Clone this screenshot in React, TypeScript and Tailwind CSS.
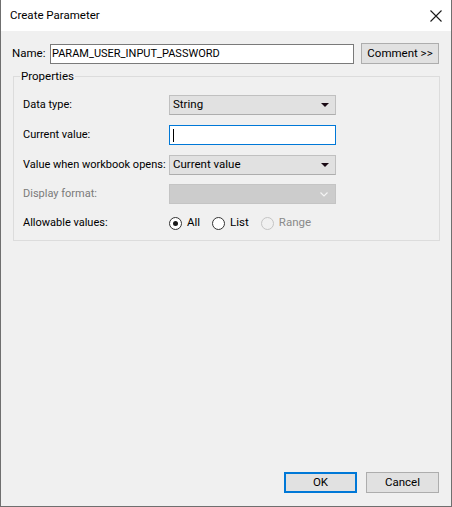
import React from 'react';

const font = { fontFamily: 'Roboto, "Liberation Sans", Arial, sans-serif' };

const Arrow: React.FC<{ disabled?: boolean }> = ({ disabled }) =>
  disabled ? (
    <svg width="8" height="5" viewBox="0 0 8 5" className="shrink-0">
      <path d="M0.5 0.5 L4 4 L7.5 0.5" fill="none" stroke="#f4f4f4" strokeWidth="1.2" />
    </svg>
  ) : (
    <svg width="8" height="4" viewBox="0 0 8 4" className="shrink-0">
      <path d="M0 0 H8 L4 4 Z" fill="#1a0a14" />
    </svg>
  );

const Select: React.FC<{ value?: string; disabled?: boolean }> = ({ value, disabled }) => (
  <div
    className={
      disabled
        ? 'w-[167px] h-[20px] flex items-center justify-end pr-[7px] bg-[#cccccc] border border-[#c4c4c4]'
        : 'w-[167px] h-[20px] flex items-center justify-between pl-[3px] pr-[6px] bg-[#e1e1e1] border border-[#c0c0c0] border-b-[#adadad]'
    }
  >
    {value && <span className="text-[11.5px] text-black leading-none whitespace-nowrap">{value}</span>}
    <Arrow disabled={disabled} />
  </div>
);

const Radio: React.FC<{ label: string; checked?: boolean; disabled?: boolean }> = ({ label, checked, disabled }) => (
  <div className="flex items-center gap-[5px]">
    <span
      className={
        'w-[13px] h-[13px] rounded-full border flex items-center justify-center ' +
        (disabled ? 'border-[#c4c4c4] bg-[#f0f0f0]' : 'border-[#333333] bg-white')
      }
    >
      {checked && <span className="w-[5px] h-[5px] rounded-full bg-[#1a1a1a]" />}
    </span>
    <span className={'text-[11.5px] ' + (disabled ? 'text-[#8a8a8a]' : 'text-black')}>{label}</span>
  </div>
);

const Row: React.FC<{ label: string; disabled?: boolean; children: React.ReactNode }> = ({ label, disabled, children }) => (
  <div className="flex items-center h-[20px]">
    <span className={'w-[146px] shrink-0 whitespace-nowrap text-[11px] ' + (disabled ? 'text-[#7a7a7a]' : 'text-black')}>
      {label}
    </span>
    {children}
  </div>
);

export default function App() {
  return (
    <div style={font} className="w-[452px] h-[507px] flex flex-col border-x border-b border-[#6f6f6f] bg-[#f0f0f0] text-black">
      <div className="h-[31px] bg-white flex items-center justify-between pl-[9px] pr-[9px] shrink-0">
        <span className="text-[11.5px] pt-[1px]">Create Parameter</span>
        <svg width="12" height="12" viewBox="0 0 12 12">
          <path d="M0.5 0.5 L11.5 11.5 M11.5 0.5 L0.5 11.5" stroke="#1a1a1a" strokeWidth="1.1" />
        </svg>
      </div>

      <div className="flex-1 flex flex-col">
        <div className="mt-[12px] flex items-center pl-[11px] pr-[12px] h-[21px]">
          <span className="text-[11.5px] w-[38px]">Name:</span>
          <div className="w-[304px] h-[20px] bg-white border border-[#7a7a7a] flex items-center pl-[1px]">
            <span className="text-[11px] leading-none whitespace-nowrap">PARAM_USER_INPUT_PASSWORD</span>
          </div>
          <button className="ml-auto w-[78px] h-[21px] bg-[#e1e1e1] border border-[#adadad] text-[11.5px] flex items-center justify-center">
            Comment &gt;&gt;
          </button>
        </div>

        <fieldset className="mt-[4px] ml-[12px] mr-[11px] border border-[#dcdcdc] pl-[9px] pb-[7px]">
          <legend className="-ml-[3px] px-[1px] text-[11.5px] leading-[16px]">Properties</legend>
          <div className="flex flex-col mt-[11px]">
            <Row label="Data type:">
              <Select value="String" />
            </Row>
            <div className="mt-[10px]">
              <Row label="Current value:">
                <div className="w-[167px] h-[20px] bg-white border border-[#0078d7] flex items-center pl-[3px]">
                  <span className="w-px h-[13px] bg-black" />
                </div>
              </Row>
            </div>
            <div className="mt-[10px]">
              <Row label="Value when workbook opens:">
                <Select value="Current value" />
              </Row>
            </div>
            <div className="mt-[9px]">
              <Row label="Display format:" disabled>
                <Select disabled />
              </Row>
            </div>
            <div className="mt-[9px]">
              <Row label="Allowable values:">
                <div className="flex items-center gap-[12px]">
                  <Radio label="All" checked />
                  <Radio label="List" />
                  <Radio label="Range" disabled />
                </div>
              </Row>
            </div>
          </div>
        </fieldset>

        <div className="mt-auto mb-[13px] flex justify-end gap-[9px] pr-[12px]">
          <button className="w-[73px] h-[21px] bg-[#e1e1e1] border-2 border-[#0078d7] text-[11.5px] flex items-center justify-center">
            OK
          </button>
          <button className="w-[73px] h-[21px] bg-[#e1e1e1] border border-[#adadad] text-[11.5px] flex items-center justify-center">
            Cancel
          </button>
        </div>
      </div>
    </div>
  );
}
